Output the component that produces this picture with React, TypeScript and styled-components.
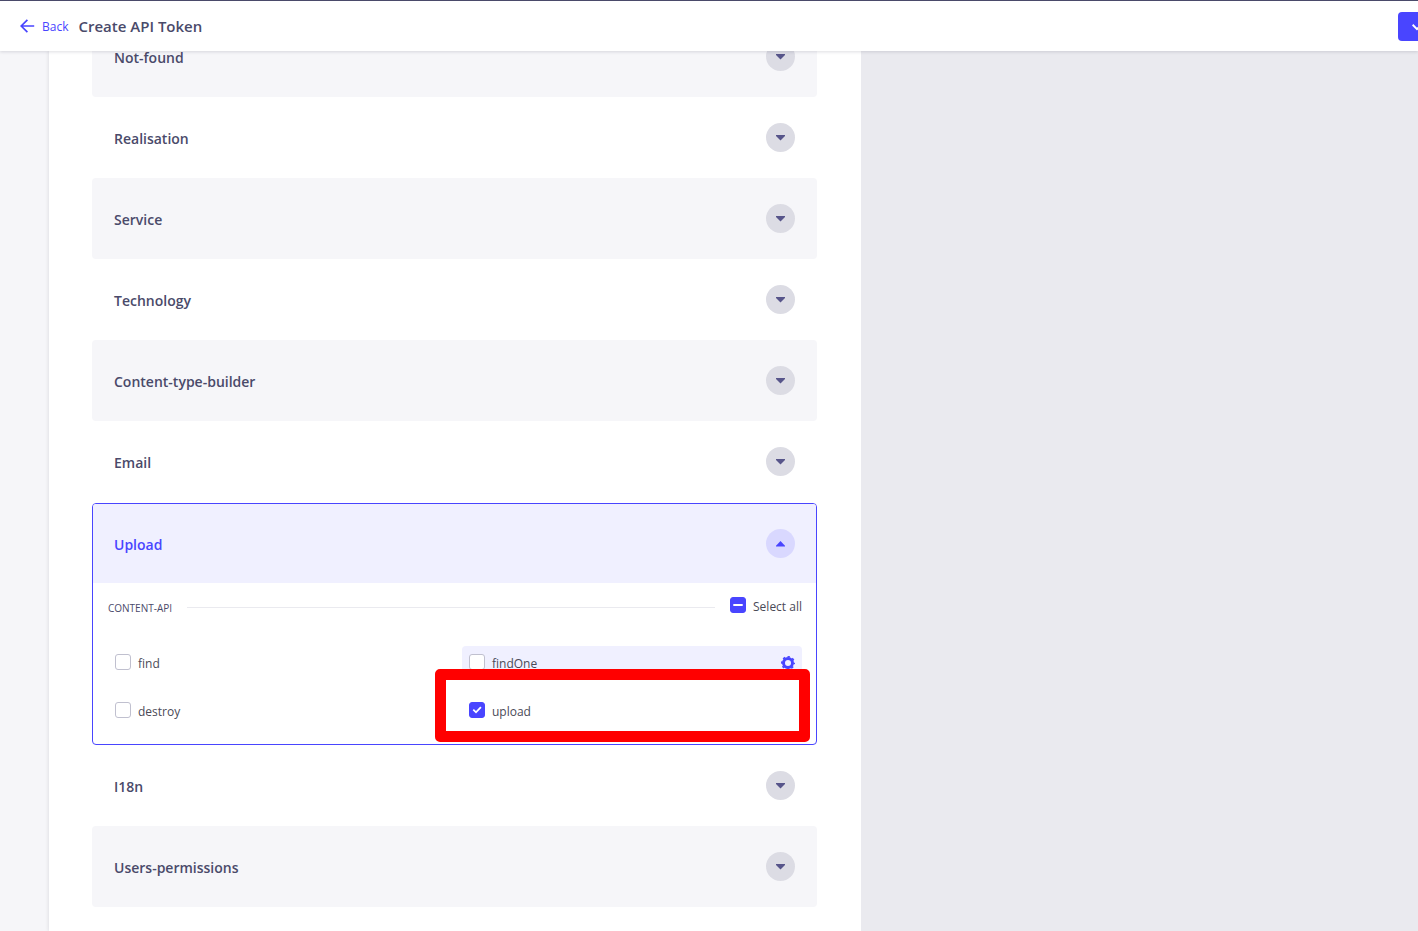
import React, { useState } from "react";
import styled, { createGlobalStyle, css } from "styled-components";

const color = {
  primary: "#4945ff",
  primarySoft: "#f0f0ff",
  primaryMid: "#d9d8ff",
  text: "#4a4a6a",
  label: "#4a4a57",
  page: "#f6f6f9",
  panel: "#eaeaef",
  circle: "#dcdce4",
  outline: "#c0c0cf",
};

const GlobalStyle = createGlobalStyle`
  *, *::before, *::after { box-sizing: border-box; }
  body {
    margin: 0;
    background: ${color.page};
    color: ${color.text};
    font-family: "Open Sans", "Noto Sans", sans-serif;
    font-size: 12px;
    line-height: 16px;
  }
  button { font: inherit; color: inherit; border: 0; cursor: pointer; }
`;

const Shell = styled.div`
  display: flex;
  flex-direction: column;
  height: 100vh;
  overflow: hidden;
`;

const Header = styled.header`
  position: relative;
  z-index: 1;
  flex: none;
  display: flex;
  align-items: center;
  gap: 10px;
  height: 51px;
  padding-left: 20px;
  overflow-x: clip;
  border-top: 1px solid ${color.text};
  background: #fff;
  box-shadow: 0 1px 3px rgba(33, 33, 52, 0.15);
`;

const BackLink = styled.a`
  display: flex;
  align-items: center;
  gap: 7px;
  color: ${color.primary};
  text-decoration: none;
`;

const LinkText = styled.span`
  padding-top: 2px;
`;

const Title = styled.h1`
  margin: 0;
  font-size: 15px;
  font-weight: 600;
  line-height: 20px;
`;

const SaveButton = styled.button`
  flex: none;
  display: flex;
  align-items: center;
  width: 84px;
  height: 29px;
  margin-left: auto;
  margin-right: -64px;
  padding: 0 14px;
  border-radius: 4px;
  background: ${color.primary};
  color: #fff;
`;

const Body = styled.main`
  flex: 1;
  min-height: 0;
  display: grid;
  grid-template-columns: minmax(0, 812fr) minmax(0, 557fr);
  padding-left: 49px;
  overflow: hidden;
`;

const Card = styled.section`
  padding: 0 44px 0 43px;
  background: #fff;
  box-shadow: 0 0 4px rgba(33, 33, 52, 0.15);
`;

const SidePanel = styled.aside`
  position: relative;
  background: ${color.panel};
`;

const List = styled.div`
  margin-top: -35px;
`;

const Item = styled.div<{ $shaded?: boolean; $open?: boolean }>`
  border-radius: 4px;
  background: ${(p) => (p.$shaded ? color.page : "#fff")};
  ${(p) =>
    p.$open &&
    css`
      margin-top: 1px;
      border: 1px solid ${color.primary};
      overflow: hidden;
    `}
`;

const Heading = styled.h2`
  margin: 0;
  font-size: 14px;
  font-weight: 600;
  line-height: 20px;
`;

const Toggle = styled.button<{ $open?: boolean }>`
  display: flex;
  align-items: center;
  justify-content: space-between;
  width: 100%;
  height: ${(p) => (p.$open ? 79 : 81)}px;
  padding: 0 ${(p) => (p.$open ? 21 : 22)}px;
  background: ${(p) => (p.$open ? color.primarySoft : "transparent")};
  color: ${(p) => (p.$open ? color.primary : color.text)};
  text-align: left;
`;

const RowName = styled.span`
  padding-top: 2px;
`;

const Circle = styled.span<{ $open?: boolean }>`
  display: flex;
  align-items: center;
  justify-content: center;
  width: 29px;
  height: 29px;
  border-radius: 50%;
  background: ${(p) => (p.$open ? color.primaryMid : color.circle)};
  color: ${(p) => (p.$open ? color.primary : "#57558a")};
`;

const Panel = styled.div`
  padding: 14px 14px 16px 15px;
`;

const GroupRow = styled.div`
  display: flex;
  align-items: center;
  gap: 15px;
  height: 18px;
  margin-bottom: 31px;
  color: ${color.label};
`;

const GroupName = styled.span`
  padding-top: 4px;
  color: ${color.text};
  font-size: 10px;
`;

const Rule = styled.hr`
  flex: 1;
  margin: 2px 0 0;
  border: 0;
  border-top: 1px solid ${color.panel};
`;

const Options = styled.div`
  display: grid;
  grid-template-columns: 1fr 1fr;
  gap: 14px;
`;

const Option = styled.div<{ $active?: boolean }>`
  position: relative;
  display: flex;
  align-items: center;
  justify-content: space-between;
  height: 34px;
  padding: 0 7px;
  border-radius: 4px;
  background: ${(p) => (p.$active ? color.primarySoft : "transparent")};
`;

const CheckLabel = styled.label`
  display: flex;
  align-items: center;
  gap: 7px;
  padding-bottom: 2px;
  color: ${color.label};
`;

const LabelText = styled.span`
  padding-top: 4px;
`;

const CheckBoxWrap = styled.span`
  display: grid;
  width: 16px;
  height: 16px;

  > * { grid-area: 1 / 1; }
  > svg { pointer-events: none; }
`;

const CheckInput = styled.input<{ $filled: boolean }>`
  appearance: none;
  width: 16px;
  height: 16px;
  margin: 0;
  border: 1px solid ${(p) => (p.$filled ? color.primary : color.outline)};
  border-radius: 3px;
  background: ${(p) => (p.$filled ? color.primary : "#fff")};
`;

const GearButton = styled.button`
  display: flex;
  padding: 0;
  background: transparent;
  color: ${color.primary};
`;

const Highlight = styled.span`
  position: absolute;
  inset: -25px -8px -14px -27px;
  border: 11px solid #f00;
  border-radius: 5px;
  pointer-events: none;
`;

const ArrowLeft = () => (
  <svg width="15" height="14" viewBox="0 0 15 14" fill="none" stroke="currentColor" strokeWidth="1.7" aria-hidden="true">
    <path d="M14.2 7H1.4M7.4 .8L1.2 7l6.2 6.2" />
  </svg>
);

const Caret = ({ up }: { up?: boolean }) => (
  <svg width="9" height="6" viewBox="0 0 9 6" fill="currentColor" aria-hidden="true">
    <path d={up ? "M4.5 0L9 4.7V5.5H0V4.7Z" : "M0 0H9V1L4.5 5.6L0 1Z"} />
  </svg>
);

const Tick = () => (
  <svg width="16" height="16" viewBox="0 0 16 16" fill="none" stroke="#fff" strokeWidth="1.8" aria-hidden="true">
    <path d="M4.3 7.7L7 10.3L11.9 5.2" />
  </svg>
);

const Dash = () => (
  <svg width="16" height="16" viewBox="0 0 16 16" fill="#fff" aria-hidden="true">
    <rect x="3.3" y="7" width="9.4" height="2" />
  </svg>
);

const SaveCheck = () => (
  <svg width="14" height="12" viewBox="0 0 14 12" fill="none" stroke="currentColor" strokeWidth="2" aria-hidden="true">
    <path d="M.6 4.8L5 9.2L13 1.4" />
  </svg>
);

const Gear = () => (
  <svg width="14" height="14" viewBox="0 0 14 14" fill="none" stroke="currentColor" aria-hidden="true">
    <circle cx="7" cy="7" r="4.5" strokeWidth="3" />
    <circle cx="7" cy="7" r="6.2" strokeWidth="1.6" strokeDasharray="2.4 2.47" strokeDashoffset="1.2" />
  </svg>
);

type CheckProps = { label: string; checked: boolean; partial?: boolean; onChange: () => void };

const Check = ({ label, checked, partial, onChange }: CheckProps) => (
  <CheckLabel>
    <CheckBoxWrap>
      <CheckInput type="checkbox" checked={checked} $filled={checked || !!partial} onChange={onChange} />
      {partial ? <Dash /> : checked ? <Tick /> : null}
    </CheckBoxWrap>
    <LabelText>{label}</LabelText>
  </CheckLabel>
);

type RowProps = { name: string; shaded?: boolean; open?: boolean; children?: React.ReactNode };

const Row = ({ name, shaded, open, children }: RowProps) => (
  <Item $shaded={shaded} $open={open}>
    <Heading>
      <Toggle type="button" $open={open} aria-expanded={!!open}>
        <RowName>{name}</RowName>
        <Circle $open={open}>
          <Caret up={open} />
        </Circle>
      </Toggle>
    </Heading>
    {children}
  </Item>
);

const ACTIONS = ["find", "findOne", "destroy", "upload"];

export default function App() {
  const [selected, setSelected] = useState<string[]>(["upload"]);
  const all = selected.length === ACTIONS.length;
  const toggle = (name: string) =>
    setSelected((s) => (s.includes(name) ? s.filter((n) => n !== name) : [...s, name]));

  return (
    <>
      <GlobalStyle />
      <Shell>
        <Header>
          <BackLink href="#back">
            <ArrowLeft />
            <LinkText>Back</LinkText>
          </BackLink>
          <Title>Create API Token</Title>
          <SaveButton type="button" aria-label="Save">
            <SaveCheck />
          </SaveButton>
        </Header>
        <Body>
          <Card>
            <List>
              <Row name="Not-found" shaded />
              <Row name="Realisation" />
              <Row name="Service" shaded />
              <Row name="Technology" />
              <Row name="Content-type-builder" shaded />
              <Row name="Email" />
              <Row name="Upload" open>
                <Panel>
                  <GroupRow>
                    <GroupName>CONTENT-API</GroupName>
                    <Rule />
                    <Check
                      label="Select all"
                      checked={all}
                      partial={selected.length > 0 && !all}
                      onChange={() => setSelected(all ? [] : ACTIONS)}
                    />
                  </GroupRow>
                  <Options>
                    {ACTIONS.map((name) => (
                      <Option key={name} $active={name === "findOne"}>
                        <Check label={name} checked={selected.includes(name)} onChange={() => toggle(name)} />
                        {name === "findOne" && (
                          <GearButton type="button" aria-label="Show bound route">
                            <Gear />
                          </GearButton>
                        )}
                        {name === "upload" && <Highlight />}
                      </Option>
                    ))}
                  </Options>
                </Panel>
              </Row>
              <Row name="I18n" />
              <Row name="Users-permissions" shaded />
            </List>
          </Card>
          <SidePanel />
        </Body>
      </Shell>
    </>
  );
}
